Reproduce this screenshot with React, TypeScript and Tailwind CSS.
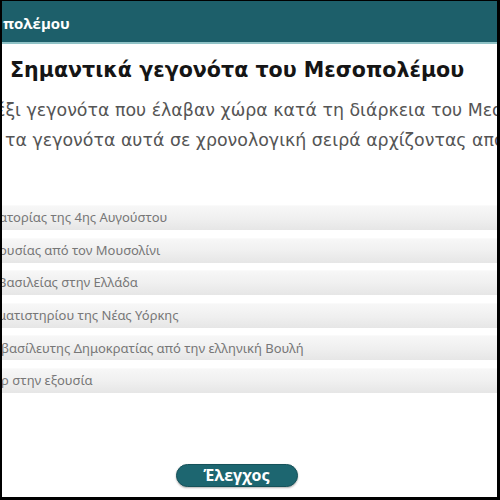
import React from "react";

const rows = [
  { text: "ατορίας της 4ης Αυγούστου", ml: "-ml-[3px]" },
  { text: "ουσίας από τον Μουσολίνι", ml: "-ml-[3px]" },
  { text: "Βασιλείας στην Ελλάδα", ml: "-ml-[4px]" },
  { text: "ματιστηρίου της Νέας Υόρκης", ml: "-ml-[4px]" },
  { text: "βασίλευτης Δημοκρατίας από την ελληνική Βουλή", ml: "-ml-[1px]" },
  { text: "ερ στην εξουσία", ml: "-ml-[7px]" },
];

export default function App() {
  return (
    <div className="w-[500px] h-[500px] overflow-hidden bg-white border-t border-l-2 border-r-[3px] border-b-[3px] border-black flex flex-col">
      <div className="h-[41px] shrink-0 bg-[#1d5f6a] flex items-center overflow-hidden">
        <span
          className="text-white font-bold text-[15px] whitespace-nowrap ml-[1px] mt-[3px]"
          style={{ fontFamily: "'Open Sans', sans-serif" }}
        >
          πολέμου
        </span>
      </div>
      <div className="h-[2px] shrink-0 bg-[#8fc2c6]" />
      <div
        className="mt-[12px] ml-[8px] h-[28px] text-[20.6px] leading-[28px] font-bold text-[#151515] whitespace-nowrap"
        style={{ fontFamily: "'DejaVu Sans', sans-serif" }}
      >
        Σημαντικά γεγονότα του Μεσοπολέμου
      </div>
      <div
        className="mt-[11px] text-[17.4px] leading-[30px] text-[#555] whitespace-nowrap overflow-hidden"
        style={{ fontFamily: "'DejaVu Sans', sans-serif" }}
      >
        <div className="-ml-[6px]">έξι γεγονότα που έλαβαν χώρα κατά τη διάρκεια του Μεσοπολέμου</div>
        <div className="ml-[3px]">τα γεγονότα αυτά σε χρονολογική σειρά αρχίζοντας από</div>
      </div>
      <div className="mt-[50px] flex flex-col gap-[7.6px]">
        {rows.map((r, i) => (
          <div
            key={i}
            className="h-[25px] flex items-center overflow-hidden bg-gradient-to-b from-[#f7f7f7] via-[#f0f0f0] to-[#e6e6e6] border-t border-[#fafafa]"
          >
            <span
              className={`text-[13px] text-[#777] whitespace-nowrap ${r.ml}`}
              style={{ fontFamily: "'Noto Sans', sans-serif" }}
            >
              {r.text}
            </span>
          </div>
        ))}
      </div>
      <div className="mt-[71px] flex justify-center pr-[26px]">
        <button
          className="w-[122px] h-[23px] rounded-full bg-[#1d6670] border border-[#16525a] text-white font-bold text-[16px] leading-[20px] shadow-[0_1px_2px_rgba(0,0,0,0.3)]"
          style={{ fontFamily: "'Open Sans', sans-serif" }}
        >
          Έλεγχος
        </button>
      </div>
    </div>
  );
}
